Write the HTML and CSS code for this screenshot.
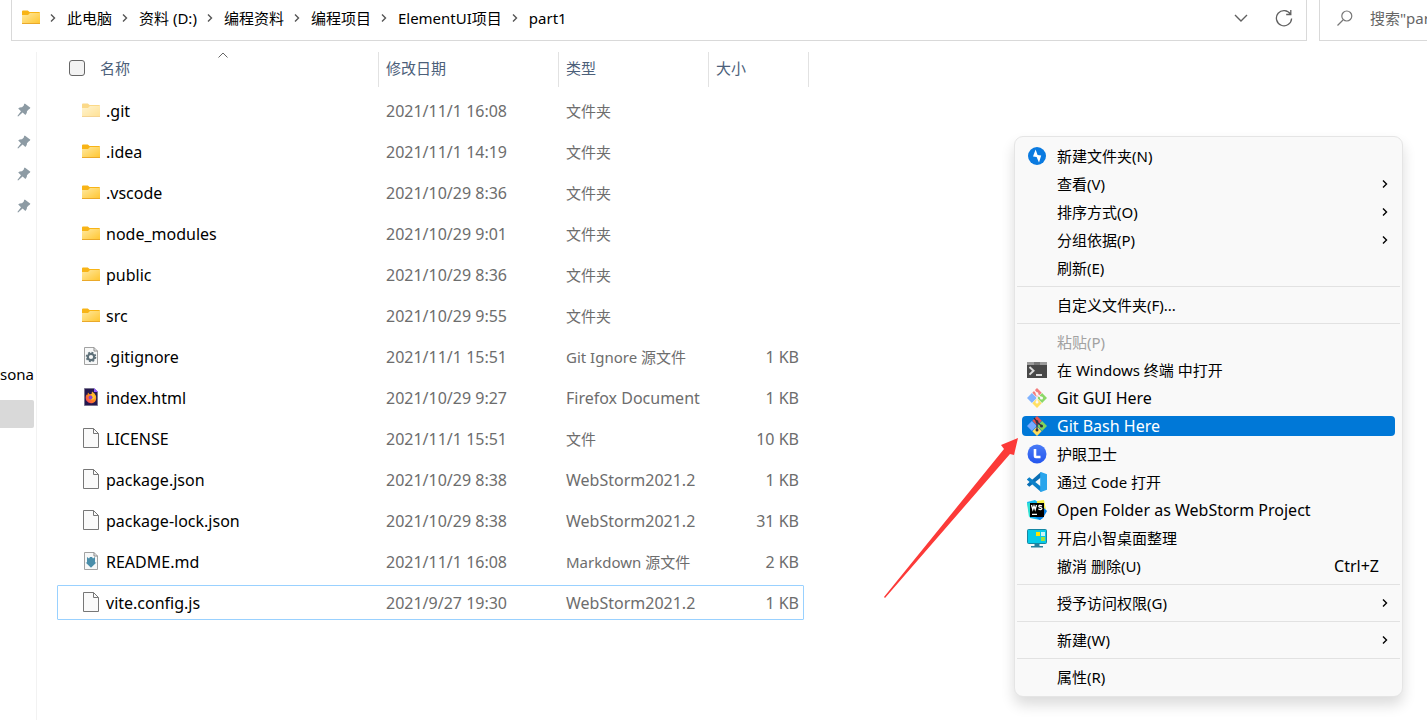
FILE: index.html
```
<!DOCTYPE html>
<html lang="zh-CN">
<head>
<meta charset="utf-8">
<title>part1</title>
<link rel="stylesheet" href="styles.css">
</head>
<body>
<svg class="sprite" aria-hidden="true">
  <defs>
    <linearGradient id="gold" x1="0" y1="0" x2="1" y2="1"><stop offset="0" stop-color="#ffe9a0"/><stop offset="1" stop-color="#ffc52e"/></linearGradient>
    <linearGradient id="fire" x1="1" y1="0" x2="0" y2="1"><stop offset="0" stop-color="#ffd43a"/><stop offset=".5" stop-color="#ff8a1e"/><stop offset="1" stop-color="#f5306a"/></linearGradient>
    <linearGradient id="blue" x1="0" y1="0" x2="0" y2="1"><stop offset="0" stop-color="#4a7cf6"/><stop offset="1" stop-color="#2456ee"/></linearGradient>
  </defs>
  <symbol id="folder" viewBox="0 0 18 15">
    <path d="M0 1.5Q0 .5 1 .5H5.8L7.6 2H17Q18 2 18 3V8H0Z" fill="#f8b416"/>
    <path d="M0 5H6L8 3H18V13.4Q18 14 17.4 14H.6Q0 14 0 13.4Z" fill="url(#gold)"/>
    <path d="M0 13.5H18" stroke="#eaa92a"/>
  </symbol>
  <symbol id="chev" viewBox="0 0 8 10"><path d="M2 1.5L5.5 5L2 8.5" fill="none" stroke="currentColor" stroke-width="1.4"/></symbol>
  <symbol id="pin" viewBox="0 0 14 14"><path d="M7.8.4L13.4 4.7Q13 6 11.6 6.4L10 8.2Q10.2 10.8 8.4 12L5.6 9.6L1.1 13.6L.4 12.9L4 8.2L1.2 5.6Q2.7 4 5 4.2L6.8 2.5Q6.8.8 7.8.4Z" fill="#8d9ba4"/></symbol>
  <symbol id="file" viewBox="0 0 16 20">
    <path d="M.5.5H10.5L15.5 5.5V19.5H.5Z" fill="#fafafa" stroke="#777"/>
    <path d="M10.5.5V5.5H15.5" fill="none" stroke="#777"/>
  </symbol>
  <symbol id="sheet" viewBox="0 0 16 20">
    <path d="M1.5 1.5H11L14.5 5V18.5H1.5Z" fill="#f7f8f8" stroke="#a2a2a2"/>
    <path d="M11 1.5V5H14.5" fill="none" stroke="#888"/>
  </symbol>
  <symbol id="gear" viewBox="0 0 16 20">
    <use href="#sheet"/>
    <circle cx="8" cy="11" r="3.2" fill="none" stroke="#5e7079" stroke-width="2.2"/>
    <circle cx="8" cy="11" r="4.6" fill="none" stroke="#5e7079" stroke-width="1.4" stroke-dasharray="1.9 1.71"/>
  </symbol>
  <symbol id="markdown" viewBox="0 0 16 20">
    <use href="#sheet"/>
    <path d="M4 6L6 7.4L7 6H9L10 7.4L12 6V11.5H13.4L8 16.8L2.6 11.5H4Z" fill="#4a8eaa"/>
  </symbol>
  <symbol id="firefox" viewBox="0 0 16 20">
    <path d="M1.5 1.5H11L14.5 5V18.5H1.5Z" fill="#25184f" stroke="#7a7590"/>
    <path d="M11 1L15 5H11Z" fill="#9059ff"/>
    <path d="M5 5.5L6.5 7.2L8.5 7L9 4.5Q12 6 13 9Q14 14 10.4 15.7Q6 17.4 3.4 13.8Q1.8 10 3.7 7.5L4.4 8Z" fill="url(#fire)"/>
    <circle cx="7.6" cy="10.6" r="2" fill="#8b45cf"/>
    <path d="M8 7Q12 7 12 11Q10.6 13 8 12.6L10 10.8Z" fill="#ffc831"/>
  </symbol>
  <symbol id="bolt" viewBox="0 0 20 20"><circle cx="10" cy="10" r="9" fill="#0a7ae0"/><path d="M8.6 3.6L6 10.4L9.6 10.9L12 16.4L14.2 9.4L10.6 9Z" fill="#fff"/></symbol>
  <symbol id="terminal" viewBox="0 0 20 20">
    <path d="M0 2H20V18H0Z" fill="#484848"/><path d="M0 2H20V5H0Z" fill="#9b9b9b"/><path d="M7 2H13V5H7Z" fill="#777"/>
    <path d="M2.5 7L6.5 10.8L2.5 14.6" fill="none" stroke="#ddd" stroke-width="2"/><path d="M9 15H15" stroke="#fff" stroke-width="1.6"/>
  </symbol>
  <symbol id="git" viewBox="0 0 20 20">
    <path d="M10 0L14.7 4.7L10 9.4L5.3 4.7Z" fill="var(--r)"/>
    <path d="M4.9 5.1L9.8 10L4.9 14.9L0 10Z" fill="var(--b)"/>
    <path d="M15.1 5.1L20 10L15.1 14.9L10.2 10Z" fill="var(--g)"/>
    <path d="M10 10.6L14.7 15.3L10 20L5.3 15.3Z" fill="var(--y)"/>
    <path d="M7 2L10 5.5V14M10 6L14.5 10" fill="none" stroke="var(--line)" stroke-width="1.2"/>
    <circle cx="10" cy="5.7" r="1.4" fill="var(--line)"/><circle cx="10" cy="14" r="1.5" fill="var(--line)"/><circle cx="14.5" cy="10" r="1.5" fill="var(--line)"/>
  </symbol>
  <symbol id="clock" viewBox="0 0 20 20"><circle cx="10" cy="10" r="9.5" fill="url(#blue)"/><path d="M8 5V12.2Q8 13 8.8 13H13.5" fill="none" stroke="#fff" stroke-width="2.6"/></symbol>
  <symbol id="code" viewBox="0 0 20 20">
    <path d="M14 0L14.5 5L2.3 14.8L0 12.8V12.2L14 0Z" fill="#0a6fb5"/>
    <path d="M2.3 5.2L14.5 15L14 20L0 7.8V7.2Z" fill="#0c80c8"/>
    <path d="M14 0L20 2.3V17.7L14 20L13.2 19V1Z" fill="#2aa5ec"/>
  </symbol>
  <symbol id="webstorm" viewBox="0 0 20 20">
    <path d="M0 2L8 0L12 3L18 5L17 16L13 20L3 18Z" fill="#16b8f0"/>
    <path d="M10 1L17 0L18 5L19 9L16 11L10 5Z" fill="#f4ee4a"/>
    <path d="M0 3L4 3V16L2 17Z" fill="#2ee0d2"/><path d="M16 7L20 11L16 18L13 20L8 17Z" fill="#087fe6"/>
    <path d="M3 3H17V17H3Z" fill="#000"/>
    <path d="M4.5 5L5.8 9.5L7 6L8.2 9.5L9.5 5M15 5.8Q11.7 4.8 11.8 6.3Q12 7.1 13.4 7.4Q15 7.8 14.8 8.7Q14 10.2 11.3 9M5 14.3H10" fill="none" stroke="#fff" stroke-width="1.3"/>
  </symbol>
  <symbol id="desktop" viewBox="0 0 20 20">
    <path d="M7.5 15H12.5V18H16V19.5H4V18H7.5Z" fill="#25809d"/>
    <rect x=".5" y="1.5" width="19" height="14" rx="1" fill="#06cbe8" stroke="#1686a3"/>
    <path d="M9 4H13V8H9Z" fill="#ffe500"/><path d="M14 4H18V8H14Z" fill="#c9f4f8"/><path d="M14 9H18V13H14Z" fill="#9be23f"/>
  </symbol>
</svg>

<header class="toolbar">
  <nav class="address" aria-label="路径">
    <svg class="folder"><use href="#folder"/></svg>
    <svg class="chev"><use href="#chev"/></svg><a href="#">此电脑</a>
    <svg class="chev"><use href="#chev"/></svg><a href="#">资料 (D:)</a>
    <svg class="chev"><use href="#chev"/></svg><a href="#">编程资料</a>
    <svg class="chev"><use href="#chev"/></svg><a href="#">编程项目</a>
    <svg class="chev"><use href="#chev"/></svg><a href="#">ElementUI项目</a>
    <svg class="chev"><use href="#chev"/></svg><a href="#">part1</a>
    <div class="address-tools">
      <button type="button" aria-label="历史记录"><svg viewBox="0 0 18 18"><path d="M3 6L9 12L15 6" fill="none" stroke="#606060" stroke-width="1.4"/></svg></button>
      <button type="button" aria-label="刷新"><svg viewBox="0 0 18 18"><path d="M15.5 5.2A7.6 7.6 0 1 0 16.6 9.5M15.8 1V5.5H11.2" fill="none" stroke="#606060" stroke-width="1.3"/></svg></button>
    </div>
  </nav>
  <label class="search">
    <svg viewBox="0 0 18 18"><path d="M1.5 16.5L7 11" stroke="#777" stroke-width="1.2"/><circle cx="10.8" cy="7" r="5" fill="none" stroke="#777" stroke-width="1.2"/></svg>
    <input type="text" aria-label="搜索" placeholder='搜索"part1"'>
  </label>
</header>

<div class="content">
  <aside class="sidebar">
    <div class="pins">
      <svg><use href="#pin"/></svg><svg><use href="#pin"/></svg><svg><use href="#pin"/></svg><svg><use href="#pin"/></svg>
    </div>
    <div class="side-item"><span>rsona</span></div>
    <div class="side-item side-current"></div>
  </aside>
  <main>
    <table class="files">
      <colgroup><col class="c-name"><col class="c-date"><col class="c-type"><col class="c-size"></colgroup>
      <thead>
        <tr>
          <th><div class="head-name"><input type="checkbox" aria-label="全选">名称</div>
            <svg class="sort" viewBox="0 0 10 6"><path d="M.5 5.5L5 1L9.5 5.5" fill="none" stroke="#666"/></svg></th>
          <th>修改日期</th><th>类型</th><th>大小</th>
        </tr>
      </thead>
      <tbody>
        <tr><td><div class="name"><svg class="folder hidden-item"><use href="#folder"/></svg>.git</div></td><td>2021/11/1 16:08</td><td class="zh">文件夹</td><td></td></tr>
        <tr><td><div class="name"><svg class="folder"><use href="#folder"/></svg>.idea</div></td><td>2021/11/1 14:19</td><td class="zh">文件夹</td><td></td></tr>
        <tr><td><div class="name"><svg class="folder"><use href="#folder"/></svg>.vscode</div></td><td>2021/10/29 8:36</td><td class="zh">文件夹</td><td></td></tr>
        <tr><td><div class="name"><svg class="folder"><use href="#folder"/></svg>node_modules</div></td><td>2021/10/29 9:01</td><td class="zh">文件夹</td><td></td></tr>
        <tr><td><div class="name"><svg class="folder"><use href="#folder"/></svg>public</div></td><td>2021/10/29 8:36</td><td class="zh">文件夹</td><td></td></tr>
        <tr><td><div class="name"><svg class="folder"><use href="#folder"/></svg>src</div></td><td>2021/10/29 9:55</td><td class="zh">文件夹</td><td></td></tr>
        <tr><td><div class="name"><svg class="file"><use href="#gear"/></svg>.gitignore</div></td><td>2021/11/1 15:51</td><td class="zh">Git Ignore 源文件</td><td>1 KB</td></tr>
        <tr><td><div class="name"><svg class="file"><use href="#firefox"/></svg>index.html</div></td><td>2021/10/29 9:27</td><td>Firefox Document</td><td>1 KB</td></tr>
        <tr><td><div class="name"><svg class="file"><use href="#file"/></svg>LICENSE</div></td><td>2021/11/1 15:51</td><td class="zh">文件</td><td>10 KB</td></tr>
        <tr><td><div class="name"><svg class="file"><use href="#file"/></svg>package.json</div></td><td>2021/10/29 8:38</td><td>WebStorm2021.2</td><td>1 KB</td></tr>
        <tr><td><div class="name"><svg class="file"><use href="#file"/></svg>package-lock.json</div></td><td>2021/10/29 8:38</td><td>WebStorm2021.2</td><td>31 KB</td></tr>
        <tr><td><div class="name"><svg class="file"><use href="#markdown"/></svg>README.md</div></td><td>2021/11/1 16:08</td><td class="zh">Markdown 源文件</td><td>2 KB</td></tr>
        <tr class="focused"><td><div class="name"><svg class="file"><use href="#file"/></svg>vite.config.js</div></td><td>2021/9/27 19:30</td><td>WebStorm2021.2</td><td>1 KB</td></tr>
      </tbody>
    </table>
  </main>
</div>

<div class="menu" role="menu">
  <button type="button" role="menuitem"><svg><use href="#bolt"/></svg><span>新建文件夹(N)</span></button>
  <button type="button" role="menuitem"><i></i><span>查看(V)</span><svg class="more"><use href="#chev"/></svg></button>
  <button type="button" role="menuitem"><i></i><span>排序方式(O)</span><svg class="more"><use href="#chev"/></svg></button>
  <button type="button" role="menuitem"><i></i><span>分组依据(P)</span><svg class="more"><use href="#chev"/></svg></button>
  <button type="button" role="menuitem"><i></i><span>刷新(E)</span></button>
  <hr>
  <button type="button" role="menuitem"><i></i><span>自定义文件夹(F)...</span></button>
  <hr>
  <button type="button" role="menuitem" disabled><i></i><span>粘贴(P)</span></button>
  <button type="button" role="menuitem"><svg><use href="#terminal"/></svg><span>在 Windows 终端 中打开</span></button>
  <button type="button" role="menuitem" class="latin"><svg class="git-light"><use href="#git"/></svg><span>Git GUI Here</span></button>
  <button type="button" role="menuitem" class="latin active"><svg class="git-dark"><use href="#git"/></svg><span>Git Bash Here</span></button>
  <button type="button" role="menuitem"><svg><use href="#clock"/></svg><span>护眼卫士</span></button>
  <button type="button" role="menuitem"><svg><use href="#code"/></svg><span>通过 Code 打开</span></button>
  <button type="button" role="menuitem" class="latin"><svg><use href="#webstorm"/></svg><span>Open Folder as WebStorm Project</span></button>
  <button type="button" role="menuitem"><svg><use href="#desktop"/></svg><span>开启小智桌面整理</span></button>
  <button type="button" role="menuitem"><i></i><span>撤消 删除(U)</span><kbd>Ctrl+Z</kbd></button>
  <hr>
  <button type="button" role="menuitem"><i></i><span>授予访问权限(G)</span><svg class="more"><use href="#chev"/></svg></button>
  <hr>
  <button type="button" role="menuitem"><i></i><span>新建(W)</span><svg class="more"><use href="#chev"/></svg></button>
  <hr>
  <button type="button" role="menuitem"><i></i><span>属性(R)</span></button>
</div>
<svg class="arrow" viewBox="0 0 136 164" aria-hidden="true"><path d="M134 1L130 18L126 17L1 161L0 160L120 12L117 8Z" fill="#fc3a38"/></svg>
</body>
</html>
```
FILE: styles.css
```
* { box-sizing: border-box; }
body {
  margin: 0;
  min-height: 100vh;
  display: flex;
  flex-direction: column;
  position: relative;
  overflow: hidden;
  background: #fff;
  color: #000;
  font: 15px/20px "Noto Sans", "Noto Sans CJK SC", sans-serif;
}
button, input { font: inherit; color: inherit; }
button { border: 0; padding: 0; background: none; }
a { color: inherit; text-decoration: none; }
svg { flex: none; display: block; }
.sprite { position: absolute; width: 0; height: 0; }

.toolbar { display: flex; gap: 12px; height: 41px; padding-left: 11px; }
.address, .search { display: flex; align-items: center; border: 1px solid #d9d9d9; border-top: 0; padding-bottom: 5px; }
.address { flex: 1; padding-left: 10px; }
.search { width: 108px; border-right: 0; padding-left: 16px; gap: 16px; color: #666; }
.search svg { width: 18px; height: 18px; }
.search input { flex: 1; min-width: 0; width: 0; border: 0; padding: 0; outline: 0; background: none; }
.search input::placeholder { color: #666; opacity: 1; }
.address a { white-space: nowrap; }
.folder { width: 18px; height: 15px; }
.chev { width: 8px; height: 10px; margin: 0 10px 0 9px; color: #555; }
.address-tools { margin-left: auto; display: flex; gap: 25px; padding-right: 13px; }
.address-tools svg { width: 18px; height: 18px; }

.content { flex: 1; display: flex; }
.sidebar { width: 37px; margin-top: 11px; padding-right: 2px; border-right: 1px solid #f2f2f2; }
.pins { display: grid; gap: 18px; justify-content: end; padding: 51px 3px 0 0; }
.pins svg { width: 14px; height: 14px; }
.side-item { height: 28px; display: flex; align-items: center; justify-content: flex-end; overflow: hidden; margin-top: 12px; }
.pins + .side-item { margin-top: 147px; }
.side-current { background: #d9d9d9; border-radius: 0 2px 2px 0; }

main { padding: 5px 0 0 20px; }
.files { width: 752px; table-layout: fixed; border-collapse: separate; border-spacing: 0 6px; }
.c-name { width: 322px; }
.c-date { width: 180px; }
.c-type { width: 150px; }
.c-size { width: 100px; }
th, td { height: 35px; padding: 0 0 0 7px; text-align: left; font-weight: 400; white-space: nowrap; }
th { color: #4c607a; border-right: 1px solid #e2e2e2; position: relative; padding-bottom: 3px; }
td { color: #6d6d6d; font-size: 16px; }
td.zh { font-size: 15px; }
td:last-child { text-align: right; padding-right: 10px; }
.head-name { display: flex; align-items: center; gap: 15px; padding-left: 5px; }
.head-name input { appearance: none; width: 16px; height: 16px; margin: 0; border: 1px solid #666; border-radius: 3px; background: #f3f3f3; }
.sort { position: absolute; left: 50%; top: 0; width: 10px; height: 6px; }
.name { display: flex; align-items: center; color: #000; padding-left: 18px; gap: 6px; }
.file { width: 16px; height: 20px; margin: 0 1px 2px; }
.hidden-item { opacity: .5; }
.focused { position: relative; }
.focused::after { content: ""; position: absolute; inset: 0 5px 0 0; border: 1px solid #99d1ff; border-radius: 1px; pointer-events: none; }

.menu {
  position: absolute;
  top: 136px;
  right: 24px;
  width: 389px;
  padding: 5px 2px;
  border: 1px solid #e5e5e5;
  border-radius: 9px;
  background: #f9f9f9;
  box-shadow: 0 8px 14px rgba(0, 0, 0, .14);
}
.menu button { display: flex; align-items: center; gap: 10px; width: 373px; height: 20px; margin: 4px 5px; padding: 0 8px 0 5px; border-radius: 4px; text-align: left; white-space: nowrap; }
.menu button + button { margin-top: 8px; }
.menu button > svg:first-child, .menu i { flex: none; width: 20px; height: 20px; }
.menu span { flex: 1; }
.menu .latin { font-size: 16px; }
.menu .more { width: 8px; height: 10px; margin-right: -2px; }
.menu kbd { font: inherit; font-size: 16px; padding-right: 8px; }
.menu button:disabled { color: #a2a2a2; }
.menu .active { background: #0078d7; color: #fff; }
.menu hr { height: 1px; margin: 8px 0; border: 0; background: #e2e2e2; }
.git-light { --r: #f47c7c; --b: #80b3ff; --g: #8cd867; --y: #ffe064; --line: #f9f9f9; }
.git-dark { --r: #e65252; --b: #78aaff; --g: #82d45c; --y: #ffdc5c; --line: #303040; }
.arrow { position: absolute; top: 437px; right: 407px; width: 136px; height: 164px; }
```
